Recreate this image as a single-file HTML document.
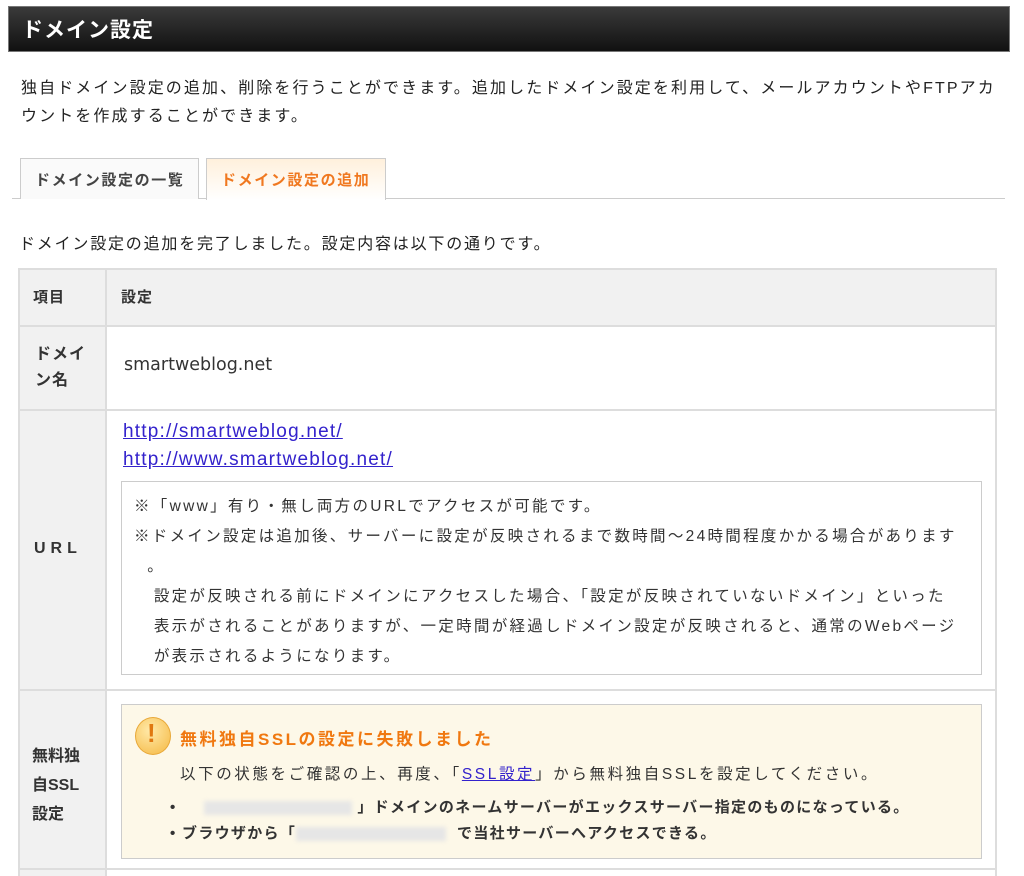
<!DOCTYPE html>
<html><head><meta charset="utf-8"><style>
*{margin:0;padding:0;box-sizing:border-box}
body{width:1024px;height:876px;background:#fff;position:relative;overflow:hidden;font-family:"Liberation Sans","Noto Sans CJK JP",sans-serif;color:#333;font-size:16px}
.a{position:absolute;white-space:nowrap}
.b{font-weight:bold}
a{color:#3322cc;text-decoration:underline}
</style></head><body>
<div class="a" style="left:8px;top:6px;width:1002px;height:46px;background:linear-gradient(#3a3a3a,#111);border:1px solid #777"></div>
<div class="a b" style="left:22px;top:14px;color:#fff;font-size:21px;letter-spacing:1px">ドメイン設定</div>
<div class="a" style="left:21px;top:75px;font-size:16px;line-height:28px;color:#222;letter-spacing:2.1px">独自ドメイン設定の追加、削除を行うことができます。追加したドメイン設定を利用して、メールアカウントやFTPアカ<br>ウントを作成することができます。</div>
<div class="a" style="left:12px;top:198px;width:993px;height:1px;background:#ccc"></div>
<div class="a" style="left:20px;top:158px;width:179px;height:41px;background:#fafafa;border:1px solid #ccc;border-bottom:none"></div>
<div class="a b" style="left:35px;top:169px;font-size:15px;color:#444;letter-spacing:1.6px">ドメイン設定の一覧</div>
<div class="a" style="left:206px;top:158px;width:180px;height:42px;background:linear-gradient(#fff0dc,#fff);border:1px solid #ccc;border-bottom:none"></div>
<div class="a b" style="left:221px;top:169px;font-size:15px;color:#f07820;letter-spacing:1.6px">ドメイン設定の追加</div>
<div class="a" style="left:19px;top:230px;font-size:16px;color:#222;letter-spacing:1.8px">ドメイン設定の追加を完了しました。設定内容は以下の通りです。</div>

<div class="a" style="left:18px;top:268px;width:979px;height:608px;border:2px solid #ddd;border-bottom:none"></div>
<div class="a" style="left:20px;top:270px;width:975px;height:56px;background:#f1f1f1"></div>
<div class="a" style="left:20px;top:326px;width:86px;height:550px;background:#f1f1f1"></div>
<div class="a" style="left:105px;top:268px;width:2px;height:608px;background:#ddd"></div>
<div class="a" style="left:18px;top:325px;width:979px;height:2px;background:#ddd"></div>
<div class="a" style="left:18px;top:409px;width:979px;height:2px;background:#ddd"></div>
<div class="a" style="left:18px;top:689px;width:979px;height:2px;background:#ddd"></div>
<div class="a" style="left:18px;top:868px;width:979px;height:2px;background:#ddd"></div>

<div class="a b" style="left:33px;top:286px;font-size:15px;letter-spacing:1px">項目</div>
<div class="a b" style="left:121px;top:286px;font-size:15px;letter-spacing:1px">設定</div>
<div class="a b" style="left:35px;top:342px;font-size:16px;line-height:26px;letter-spacing:1px">ドメイ<br>ン名</div>
<div class="a" style="left:124px;top:355px;font-family:'DejaVu Sans',sans-serif;font-size:17.5px">smartweblog.net</div>
<div class="a b" style="left:34px;top:540px;font-size:16px;letter-spacing:5px">URL</div>
<div class="a" style="left:123px;top:418px;font-size:19px;line-height:28px;letter-spacing:1.2px"><a>http://smartweblog.net/</a><br><a>http://www.smartweblog.net/</a></div>
<div class="a" style="left:121px;top:481px;width:861px;height:194px;border:1px solid #ccc"></div>
<div class="a" style="left:134px;top:492px;font-size:15.5px;line-height:30px;color:#333;letter-spacing:2.3px">※「www」有り・無し両方のURLでアクセスが可能です。<br>※ドメイン設定は追加後、サーバーに設定が反映されるまで数時間～24時間程度かかる場合があります<br>&nbsp;&nbsp;。<br>&nbsp;&nbsp;&nbsp;設定が反映される前にドメインにアクセスした場合、「設定が反映されていないドメイン」といった<br>&nbsp;&nbsp;&nbsp;表示がされることがありますが、一定時間が経過しドメイン設定が反映されると、通常のWebページ<br>&nbsp;&nbsp;&nbsp;が表示されるようになります。</div>

<div class="a b" style="left:32px;top:742px;font-size:16px;line-height:29px">無料独<br>自SSL<br>設定</div>
<div class="a" style="left:121px;top:704px;width:861px;height:155px;background:#fdf8e8;border:1px solid #ccc"></div>
<div class="a" style="left:135px;top:717px;width:36px;height:38px;border-radius:50%;background:radial-gradient(circle at 40% 35%,#ffe9a8,#f5b842);border:1px solid #e8a838"></div>
<div class="a b" style="left:147px;top:718px;font-size:26px;color:#e07810">!</div>
<div class="a b" style="left:180px;top:725px;font-size:17px;color:#f07810;letter-spacing:2.5px">無料独自SSLの設定に失敗しました</div>
<div class="a" style="left:180px;top:762px;font-size:15.5px;letter-spacing:2.6px">以下の状態をご確認の上、再度、「<a>SSL設定</a>」から無料独自SSLを設定してください。</div>
<div class="a b" style="left:170px;top:796px;font-size:15px;letter-spacing:1.3px">•&nbsp;&nbsp;&nbsp;&nbsp;&nbsp;<span style="display:inline-block;width:148px;height:14px;background:#e6e6e6;filter:blur(2px);vertical-align:middle"></span> 」ドメインのネームサーバーがエックスサーバー指定のものになっている。</div>
<div class="a b" style="left:170px;top:822px;font-size:15px;letter-spacing:1.3px">• ブラウザから「<span style="display:inline-block;width:150px;height:14px;background:#e6e6e6;filter:blur(2px);vertical-align:middle"></span>&nbsp;&nbsp;で当社サーバーへアクセスできる。</div>
</body></html>
